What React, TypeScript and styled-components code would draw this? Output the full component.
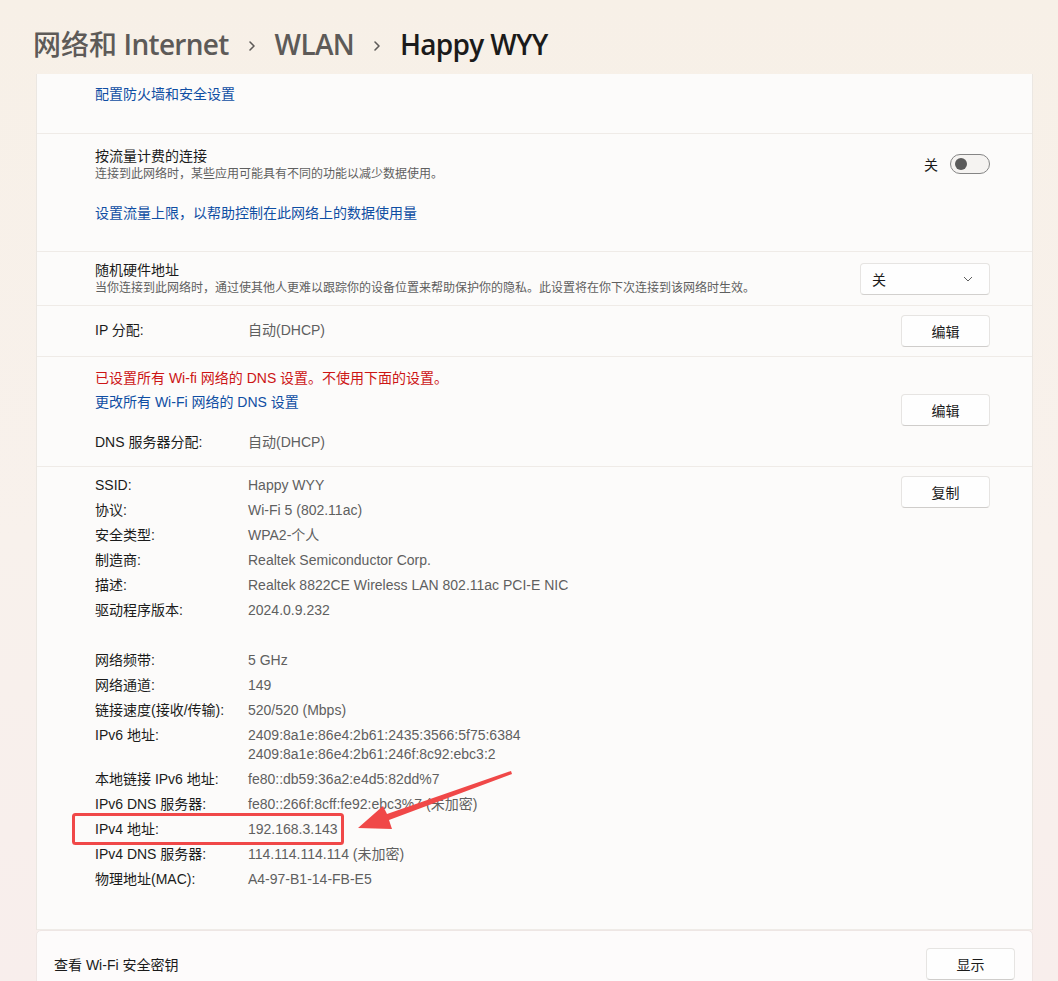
import React from 'react';
import styled, { createGlobalStyle } from 'styled-components';

const GlobalStyle = createGlobalStyle`
  html, body {
    margin: 0;
    padding: 0;
    height: 981px;
    overflow: hidden;
  }
  body {
    font-family: "Liberation Sans", "Noto Sans CJK SC", sans-serif;
    background: linear-gradient(180deg, #f7f0e7 0%, #f8f1ec 55%, #f8eeec 100%);
    color: #1b1b1b;
  }
`;

const Page = styled.div`
  position: relative;
  width: 1058px;
  height: 981px;
  overflow: hidden;
`;

const Header = styled.div`
  display: flex;
  align-items: center;
  gap: 17px;
  padding: 26px 0 0 33px;
  height: 62px;
  box-sizing: border-box;
  font-family: "Open Sans", "Noto Sans CJK SC", sans-serif;
  font-size: 28px;
  line-height: 36px;
`;

const Crumb = styled.span<{ $current?: boolean }>`
  color: ${(p) => (p.$current ? '#1b1b1b' : '#5d5a58')};
  font-weight: 600;
  letter-spacing: -0.7px;
`;

const CjkPart = styled.span`
  font-weight: 500;
  letter-spacing: 0;
`;

const Chevron = styled.svg`
  width: 8px;
  height: 12px;
  margin: 3px 2px 0;
`;

const Panel = styled.div`
  margin: 12px 25px 0 36px;
  background: #fcfbfa;
  border-left: 1px solid #ebe7e2;
  border-right: 1px solid #ebe7e2;
`;

const Section = styled.div<{ $pt: number; $pb: number }>`
  display: flex;
  justify-content: space-between;
  align-items: flex-start;
  padding: ${(p) => p.$pt}px 42px ${(p) => p.$pb}px 58px;
  border-bottom: 1px solid #efebe7;
`;

const CenterSection = styled.div<{ $h: number }>`
  display: flex;
  justify-content: space-between;
  align-items: center;
  height: ${(p) => p.$h}px;
  box-sizing: border-box;
  padding: 0 42px 0 58px;
  border-bottom: 1px solid #efebe7;
`;

const Column = styled.div`
  display: flex;
  flex-direction: column;
`;

const Link = styled.a<{ $mt?: number }>`
  color: #0f4ea3;
  font-size: 14px;
  line-height: 20px;
  text-decoration: none;
  margin-top: ${(p) => p.$mt ?? 0}px;
  cursor: pointer;
`;

const Title = styled.div`
  font-size: 14px;
  line-height: 20px;
  color: #1b1b1b;
`;

const Sub = styled.div`
  font-size: 12px;
  line-height: 17px;
  color: #5f5f5f;
`;

const Warning = styled.div`
  font-size: 14px;
  line-height: 20px;
  color: #cc1515;
`;

const ToggleWrap = styled.div`
  display: flex;
  align-items: center;
  gap: 12px;
  font-size: 14px;
  margin-top: 8px;
`;

const ToggleTrack = styled.div`
  width: 34px;
  height: 18px;
  border: 1px solid #858585;
  border-radius: 10px;
  background: #f5f3f1;
  display: flex;
  align-items: center;
  padding-left: 4px;
  box-sizing: content-box;
`;

const Knob = styled.div`
  width: 12px;
  height: 12px;
  border-radius: 50%;
  background: #5b5b5b;
`;

const Dropdown = styled.div`
  width: 130px;
  height: 32px;
  box-sizing: border-box;
  display: flex;
  align-items: center;
  justify-content: space-between;
  padding: 0 16px 0 11px;
  background: #fefefe;
  border: 1px solid #e6e4e2;
  border-bottom-color: #d2d0ce;
  border-radius: 4px;
  font-size: 14px;
`;

const Button = styled.button`
  width: 89px;
  height: 32px;
  background: #fefefe;
  border: 1px solid #e6e4e2;
  border-bottom-color: #cfcdcb;
  border-radius: 4px;
  font-family: inherit;
  font-size: 14px;
  color: #1b1b1b;
  flex-shrink: 0;
`;

const InfoRow = styled.div<{ $mt?: number }>`
  display: flex;
  font-size: 14px;
  line-height: 19px;
  margin-top: ${(p) => p.$mt ?? 0}px;
`;

const Label = styled.div`
  width: 153px;
  flex-shrink: 0;
  color: #1b1b1b;
`;

const Value = styled.div`
  color: #5f5f5f;
  display: flex;
  flex-direction: column;
`;

const Rows = styled.div`
  display: flex;
  flex-direction: column;
  gap: 6px;
`;

const Spacer = styled.div`
  height: 19px;
`;

const KeyCard = styled.div`
  margin: 0 25px 0 36px;
  height: 72px;
  box-sizing: border-box;
  display: flex;
  align-items: center;
  justify-content: space-between;
  padding: 0 17px 4px 17px;
  background: #fdfbfb;
  border: 1px solid #eee6e4;
  border-radius: 5px 5px 0 0;
  font-size: 14px;
`;

const Overlay = styled.svg`
  position: absolute;
  left: 0;
  top: 0;
  pointer-events: none;
`;

const info: [string, string[]][] = [
  ['SSID:', ['Happy WYY']],
  ['协议:', ['Wi-Fi 5 (802.11ac)']],
  ['安全类型:', ['WPA2-个人']],
  ['制造商:', ['Realtek Semiconductor Corp.']],
  ['描述:', ['Realtek 8822CE Wireless LAN 802.11ac PCI-E NIC']],
  ['驱动程序版本:', ['2024.0.9.232']],
];

const netInfo: [string, string[]][] = [
  ['网络频带:', ['5 GHz']],
  ['网络通道:', ['149']],
  ['链接速度(接收/传输):', ['520/520 (Mbps)']],
  ['IPv6 地址:', ['2409:8a1e:86e4:2b61:2435:3566:5f75:6384', '2409:8a1e:86e4:2b61:246f:8c92:ebc3:2']],
  ['本地链接 IPv6 地址:', ['fe80::db59:36a2:e4d5:82dd%7']],
  ['IPv6 DNS 服务器:', ['fe80::266f:8cff:fe92:ebc3%7 (未加密)']],
  ['IPv4 地址:', ['192.168.3.143']],
  ['IPv4 DNS 服务器:', ['114.114.114.114 (未加密)']],
  ['物理地址(MAC):', ['A4-97-B1-14-FB-E5']],
];

const renderRows = (rows: [string, string[]][]) =>
  rows.map(([label, values]) => (
    <InfoRow key={label}>
      <Label>{label}</Label>
      <Value>
        {values.map((v) => (
          <span key={v}>{v}</span>
        ))}
      </Value>
    </InfoRow>
  ));

const Sep = () => (
  <Chevron viewBox="0 0 8 12">
    <path d="M2 2 L6 6 L2 10" fill="none" stroke="#5d5a58" strokeWidth="1.6" strokeLinecap="round" strokeLinejoin="round" />
  </Chevron>
);

const App: React.FC = () => {
  return (
    <Page>
      <GlobalStyle />
      <Header>
        <Crumb>
          <CjkPart>网络和</CjkPart> Internet
        </Crumb>
        <Sep />
        <Crumb>WLAN</Crumb>
        <Sep />
        <Crumb $current>Happy WYY</Crumb>
      </Header>

      <Panel>
        <Section $pt={10} $pb={29}>
          <Link>配置防火墙和安全设置</Link>
        </Section>

        <Section $pt={12} $pb={28}>
          <Column>
            <Title>按流量计费的连接</Title>
            <Sub>连接到此网络时，某些应用可能具有不同的功能以减少数据使用。</Sub>
            <Link $mt={20}>设置流量上限，以帮助控制在此网络上的数据使用量</Link>
          </Column>
          <ToggleWrap>
            <span>关</span>
            <ToggleTrack>
              <Knob />
            </ToggleTrack>
          </ToggleWrap>
        </Section>

        <CenterSection $h={54}>
          <Column>
            <Title>随机硬件地址</Title>
            <Sub>当你连接到此网络时，通过使其他人更难以跟踪你的设备位置来帮助保护你的隐私。此设置将在你下次连接到该网络时生效。</Sub>
          </Column>
          <Dropdown>
            <span>关</span>
            <svg width="10" height="6" viewBox="0 0 10 6">
              <path d="M1 1 L5 5 L9 1" fill="none" stroke="#5f5f5f" strokeWidth="1" />
            </svg>
          </Dropdown>
        </CenterSection>

        <CenterSection $h={51}>
          <InfoRow $mt={-2}>
            <Label>IP 分配:</Label>
            <Value>自动(DHCP)</Value>
          </InfoRow>
          <Button>编辑</Button>
        </CenterSection>

        <Section $pt={11} $pb={14} style={{ alignItems: 'center' }}>
          <Column>
            <Warning>已设置所有 Wi-fi 网络的 DNS 设置。不使用下面的设置。</Warning>
            <Link $mt={4}>更改所有 Wi-Fi 网络的 DNS 设置</Link>
            <InfoRow $mt={20} style={{ lineHeight: '20px' }}>
              <Label>DNS 服务器分配:</Label>
              <Value>自动(DHCP)</Value>
            </InfoRow>
          </Column>
          <Button>编辑</Button>
        </Section>

        <Section $pt={9} $pb={40}>
          <Rows>
            {renderRows(info)}
            <Spacer />
            {renderRows(netInfo)}
          </Rows>
          <Button>复制</Button>
        </Section>
      </Panel>

      <KeyCard>
        <span>查看 Wi-Fi 安全密钥</span>
        <Button>显示</Button>
      </KeyCard>

      <Overlay width="1058" height="981" viewBox="0 0 1058 981">
        <rect x="73.5" y="814.5" width="269" height="29" rx="2" fill="none" stroke="#f04848" strokeWidth="3" />
        <polygon
          points="358,828 383,806 387,814 511,771 512,774 389,820 392,829"
          fill="#f04848"
        />
      </Overlay>
    </Page>
  );
};

export default App;
